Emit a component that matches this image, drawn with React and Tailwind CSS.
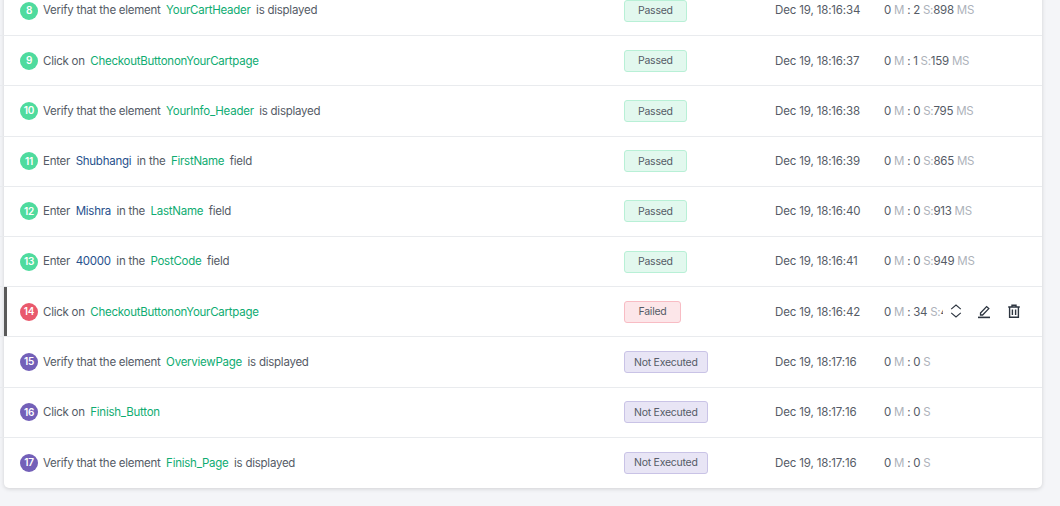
import React from "react";

const rows = [
  { n: 8, parts: [["t", "Verify that the element"], ["e", "YourCartHeader"], ["t", "is displayed"]], s: "P", d: "Dec 19, 18:16:34", m: "0", sec: "2", ms: "898" },
  { n: 9, parts: [["t", "Click on"], ["e", "CheckoutButtononYourCartpage"]], s: "P", d: "Dec 19, 18:16:37", m: "0", sec: "1", ms: "159" },
  { n: 10, parts: [["t", "Verify that the element"], ["e", "YourInfo_Header"], ["t", "is displayed"]], s: "P", d: "Dec 19, 18:16:38", m: "0", sec: "0", ms: "795" },
  { n: 11, parts: [["t", "Enter"], ["v", "Shubhangi"], ["t", "in the"], ["e", "FirstName"], ["t", "field"]], s: "P", d: "Dec 19, 18:16:39", m: "0", sec: "0", ms: "865" },
  { n: 12, parts: [["t", "Enter"], ["v", "Mishra"], ["t", "in the"], ["e", "LastName"], ["t", "field"]], s: "P", d: "Dec 19, 18:16:40", m: "0", sec: "0", ms: "913" },
  { n: 13, parts: [["t", "Enter"], ["v", "40000"], ["t", "in the"], ["e", "PostCode"], ["t", "field"]], s: "P", d: "Dec 19, 18:16:41", m: "0", sec: "0", ms: "949" },
  { n: 14, parts: [["t", "Click on"], ["e", "CheckoutButtononYourCartpage"]], s: "F", d: "Dec 19, 18:16:42", m: "0", sec: "34", ms: "412", active: true },
  { n: 15, parts: [["t", "Verify that the element"], ["e", "OverviewPage"], ["t", "is displayed"]], s: "N", d: "Dec 19, 18:17:16", m: "0", sec: "0" },
  { n: 16, parts: [["t", "Click on"], ["e", "Finish_Button"]], s: "N", d: "Dec 19, 18:17:16", m: "0", sec: "0" },
  { n: 17, parts: [["t", "Verify that the element"], ["e", "Finish_Page"], ["t", "is displayed"]], s: "N", d: "Dec 19, 18:17:16", m: "0", sec: "0", last: true },
];

const dot = { P: "bg-[#4fdb9e]", F: "bg-[#e9596c]", N: "bg-[#7360b8]" };
const badge = {
  P: ["Passed", "px-[13px] bg-[#e2f8ee] border-[#b8f0d6]"],
  F: ["Failed", "px-[13.5px] bg-[#fce6e9] border-[#f8bcc4]"],
  N: ["Not Executed", "px-[9px] bg-[#e8e5f5] border-[#c9c3e6]"],
};
const partClass = { t: "text-[#555b66]", e: "text-[#0fac72]", v: "text-[#27508c]" };

function Duration({ r }) {
  return (
    <span className="text-[#555b66] whitespace-nowrap">
      {r.m} <span className="text-[#adb2ba]">M</span> : {r.sec}{" "}
      <span className="text-[#adb2ba]">S</span>
      {r.ms && (
        <>
          <span className="text-[#adb2ba]">:</span>
          {r.ms} <span className="text-[#adb2ba]">MS</span>
        </>
      )}
    </span>
  );
}

function Actions() {
  return (
    <div className="absolute left-[948px] top-0 h-full pb-[2px] flex items-center gap-[13px] text-[#2d3540]">
      <svg width="16" height="16" viewBox="0 0 16 16" fill="none" stroke="currentColor" strokeWidth="1.1">
        <path d="M3.2 6.2 8 2l4.8 4.2M3.2 9.8 8 14l4.8-4.2" />
      </svg>
      <svg width="16" height="16" viewBox="0 0 16 16" fill="none" stroke="currentColor" strokeWidth="1.3" className="-ml-px">
        <path d="M4.5 10 10.6 3.6l2.2 2L6.6 12H4.5z" />
        <path d="M2 14.4h12" strokeWidth="1.6" />
      </svg>
      <svg width="16" height="16" viewBox="0 0 16 16" fill="none" stroke="currentColor" strokeWidth="1.4" className="ml-px">
        <path d="M2.2 4h11.6M6 4V2.2h4V4M3.6 4.2v10h8.8v-10M6.4 6.5v5.5M9.6 6.5v5.5" />
      </svg>
    </div>
  );
}

export default function App() {
  return (
    <div className="h-[506px] w-[1060px] overflow-hidden bg-[#f4f5f8] font-['Inter',sans-serif] text-[11.5px] tracking-[-0.25px]">
      <div className="ml-1 mt-[-14px] w-[1038px] bg-white rounded-b-[5px] shadow-[0_1px_4px_rgba(0,0,0,0.15)]">
        {rows.map((r) => (
          <div
            key={r.n}
            className={`relative -ml-1 pl-1 flex items-center h-[50.2px] ${r.last ? "" : "border-b border-[#e9ebee]"}`}
          >
            {r.active && <div className="absolute left-1 top-0 bottom-0 w-[3px] bg-[#5a5a5a]" />}
            <div className="w-[620px] pl-4 flex items-center shrink-0">
              <span className={`w-[18px] h-[18px] rounded-full ${dot[r.s]} text-white text-[10px] font-semibold flex items-center justify-center shrink-0`}>
                {r.n}
              </span>
              <span className="ml-[5px] pt-px flex gap-[5.5px] whitespace-nowrap">
                {r.parts.map(([k, txt], i) => (
                  <span key={i} className={partClass[k]}>{txt}</span>
                ))}
              </span>
            </div>
            <div className="w-[151px] shrink-0">
              <span className={`inline-flex items-center h-[22px] pt-px rounded-[3px] border text-[10.5px] text-[#555b66] ${badge[r.s][1]}`}>
                {badge[r.s][0]}
              </span>
            </div>
            <div className="w-[109px] shrink-0 pt-px tracking-[-0.15px] text-[#555b66] whitespace-nowrap">{r.d}</div>
            {r.active ? (
              <>
                <div className="w-[59px] pt-px overflow-hidden"><Duration r={r} /></div>
                <Actions />
              </>
            ) : (
              <div className="pt-px"><Duration r={r} /></div>
            )}
          </div>
        ))}
      </div>
    </div>
  );
}
